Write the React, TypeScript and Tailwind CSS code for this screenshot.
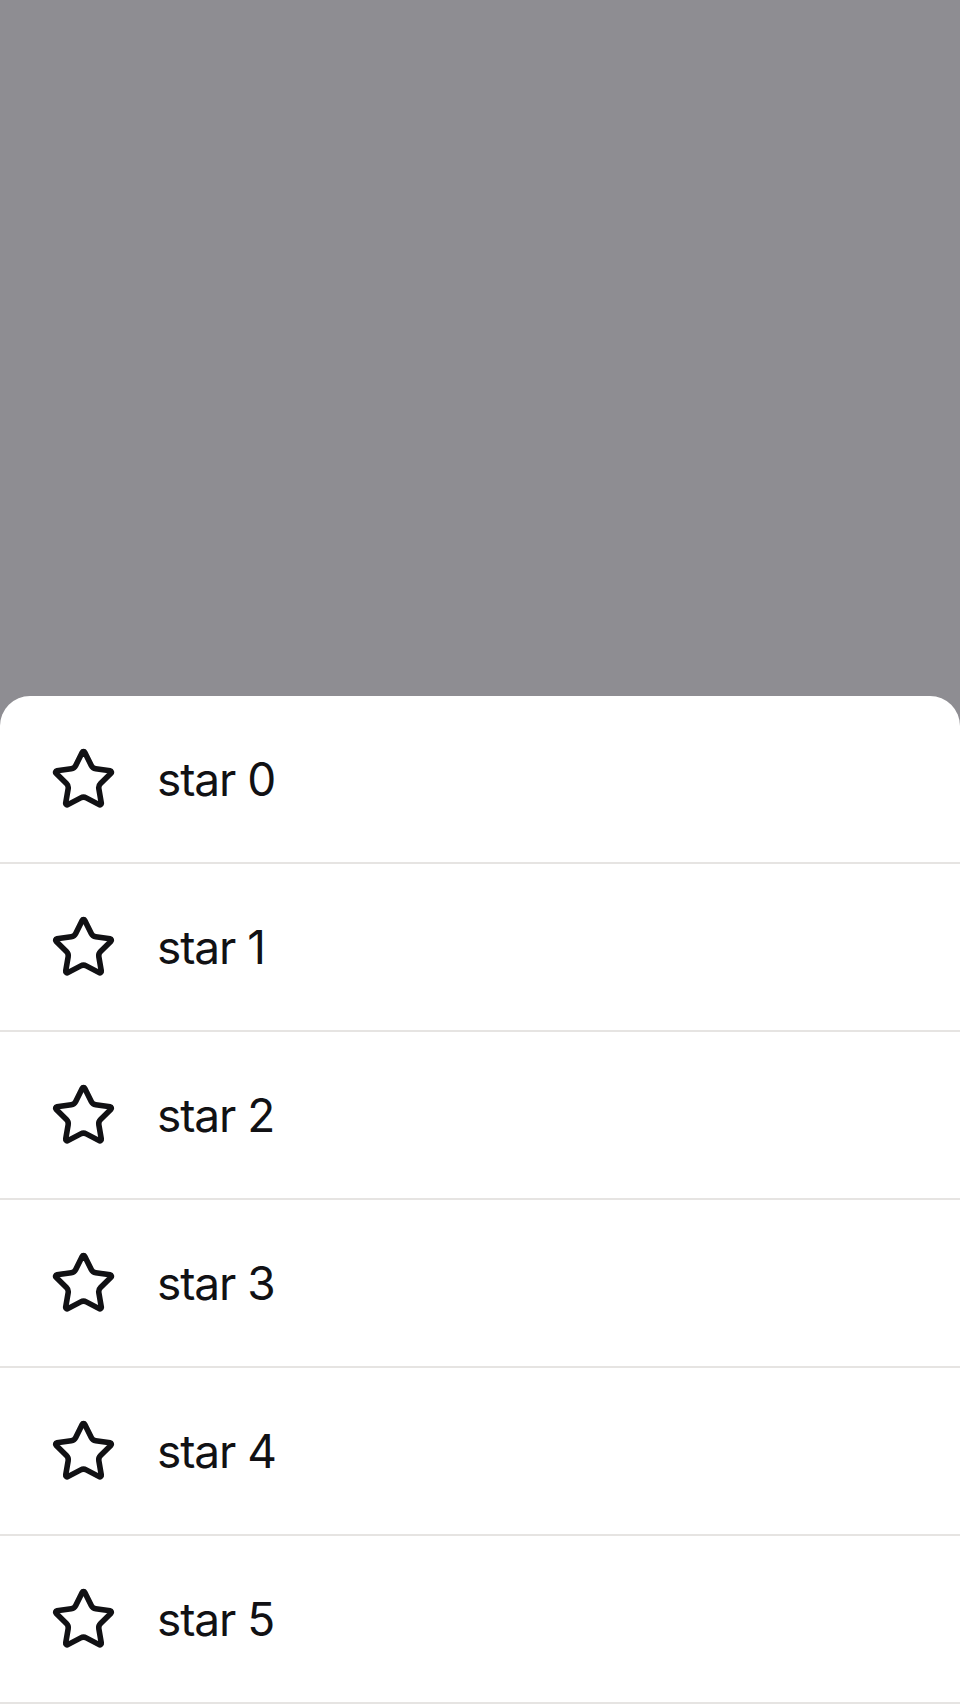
import React from "react";

function StarIcon() {
  return (
    <svg
      viewBox="0 0 24 24"
      width={67}
      height={67}
      className="shrink-0"
      aria-hidden="true"
      fill="none"
      stroke="#111114"
      strokeWidth={2}
      strokeLinecap="round"
      strokeLinejoin="round"
    >
      <path d="M11.525 2.295a.53.53 0 0 1 .95 0l2.31 4.679a2.123 2.123 0 0 0 1.595 1.16l5.166.756a.53.53 0 0 1 .294.904l-3.736 3.638a2.123 2.123 0 0 0-.611 1.878l.882 5.14a.53.53 0 0 1-.771.56l-4.618-2.428a2.122 2.122 0 0 0-1.973 0L6.396 21.01a.53.53 0 0 1-.77-.56l.881-5.139a2.122 2.122 0 0 0-.611-1.879L2.16 9.795a.53.53 0 0 1 .294-.906l5.165-.755a2.122 2.122 0 0 0 1.597-1.16z" />
    </svg>
  );
}

export default function App() {
  const items = [0, 1, 2, 3, 4, 5];
  return (
    <div
      className="flex h-[1704px] w-[960px] flex-col bg-[#8e8d92]"
      style={{ fontFamily: "Inter, 'Noto Sans', sans-serif" }}
    >
      <div className="h-[696px] shrink-0" />
      <div className="flex flex-1 flex-col overflow-hidden rounded-t-[30px] bg-white">
        {items.map((i) => (
          <div
            key={i}
            className="flex h-[168px] shrink-0 items-center border-b-2 border-[#e6e4e2] pl-[50px]"
          >
            <StarIcon />
            <span className="ml-[40px] text-[46px] leading-none tracking-[-1.1px] text-[#111114]">
              star {i}
            </span>
          </div>
        ))}
      </div>
    </div>
  );
}
